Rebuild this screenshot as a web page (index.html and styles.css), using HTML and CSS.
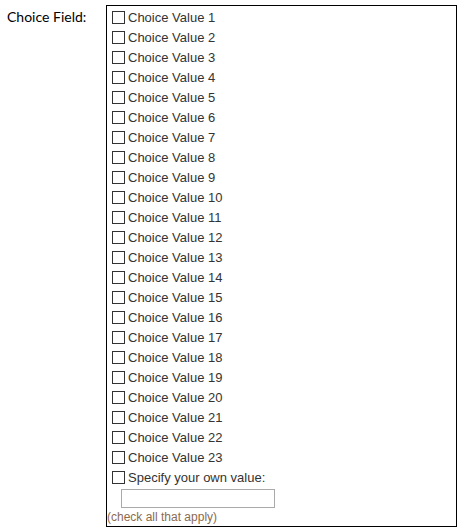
FILE: index.html
```html
<!DOCTYPE html>
<html>
<head>
<meta charset="utf-8">
<link rel="stylesheet" href="styles.css">
</head>
<body>
<div class="field">
  <div class="field-label">Choice Field:</div>
  <div class="choices">
    <label class="choice"><input type="checkbox" class="cb"><span>Choice Value 1</span></label>
    <label class="choice"><input type="checkbox" class="cb"><span>Choice Value 2</span></label>
    <label class="choice"><input type="checkbox" class="cb"><span>Choice Value 3</span></label>
    <label class="choice"><input type="checkbox" class="cb"><span>Choice Value 4</span></label>
    <label class="choice"><input type="checkbox" class="cb"><span>Choice Value 5</span></label>
    <label class="choice"><input type="checkbox" class="cb"><span>Choice Value 6</span></label>
    <label class="choice"><input type="checkbox" class="cb"><span>Choice Value 7</span></label>
    <label class="choice"><input type="checkbox" class="cb"><span>Choice Value 8</span></label>
    <label class="choice"><input type="checkbox" class="cb"><span>Choice Value 9</span></label>
    <label class="choice"><input type="checkbox" class="cb"><span>Choice Value 10</span></label>
    <label class="choice"><input type="checkbox" class="cb"><span>Choice Value 11</span></label>
    <label class="choice"><input type="checkbox" class="cb"><span>Choice Value 12</span></label>
    <label class="choice"><input type="checkbox" class="cb"><span>Choice Value 13</span></label>
    <label class="choice"><input type="checkbox" class="cb"><span>Choice Value 14</span></label>
    <label class="choice"><input type="checkbox" class="cb"><span>Choice Value 15</span></label>
    <label class="choice"><input type="checkbox" class="cb"><span>Choice Value 16</span></label>
    <label class="choice"><input type="checkbox" class="cb"><span>Choice Value 17</span></label>
    <label class="choice"><input type="checkbox" class="cb"><span>Choice Value 18</span></label>
    <label class="choice"><input type="checkbox" class="cb"><span>Choice Value 19</span></label>
    <label class="choice"><input type="checkbox" class="cb"><span>Choice Value 20</span></label>
    <label class="choice"><input type="checkbox" class="cb"><span>Choice Value 21</span></label>
    <label class="choice"><input type="checkbox" class="cb"><span>Choice Value 22</span></label>
    <label class="choice"><input type="checkbox" class="cb"><span>Choice Value 23</span></label>
    <label class="choice"><input type="checkbox" class="cb"><span>Specify your own value:</span></label>
    <input type="text" class="own-value">
    <div class="hint">(check all that apply)</div>
  </div>
</div>
</body>
</html>
```
FILE: styles.css
```css
html, body {
  margin: 0;
  padding: 0;
  background: #fff;
}
.field {
  display: flex;
  align-items: flex-start;
  padding-top: 5px;
}
.field-label {
  width: 99px;
  padding-left: 7px;
  padding-top: 3px;
  font-family: "Lato", "Open Sans", sans-serif;
  font-size: 14px;
  line-height: 18px;
  color: #000;
}
.choices {
  width: 351px;
  box-sizing: border-box;
  border: 1px solid #000;
  padding: 1px 0 0 0;
  display: flex;
  flex-direction: column;
  font-family: "Liberation Sans", Arial, sans-serif;
  font-size: 13px;
  color: #333;
}
.choice {
  display: flex;
  align-items: center;
  height: 20px;
  padding-left: 5px;
}
.cb {
  appearance: none;
  -webkit-appearance: none;
  width: 13px;
  height: 13px;
  margin: 0 3px 0 0;
  border: 1px solid #333;
  border-radius: 0;
  background: #fff;
  box-sizing: border-box;
}
.own-value {
  margin: 2px 0 0 14px;
  width: 154px;
  height: 19px;
  box-sizing: border-box;
  border: 1px solid #aaa;
  padding: 0;
  outline: none;
}
.hint {
  height: 18px;
  line-height: 18px;
  font-size: 12px;
  color: #8b6b4f;
}
```
